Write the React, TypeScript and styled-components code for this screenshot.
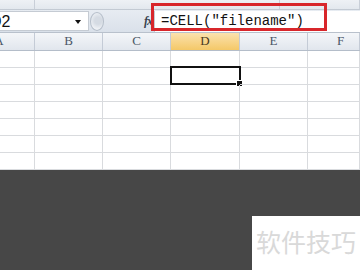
import React from 'react';
import styled, { createGlobalStyle } from 'styled-components';

const GlobalStyle = createGlobalStyle`
  html, body {
    margin: 0;
    padding: 0;
    background: #474747;
  }
`;

const Screen = styled.div`
  position: relative;
  width: 360px;
  height: 270px;
  overflow: hidden;
  display: flex;
  flex-direction: column;
  background: #474747;
`;

const RibbonStrip = styled.div`
  height: 9px;
  display: flex;
  background: linear-gradient(#eef1f5, #e3e8ee);
  border-bottom: 1px solid #c3cad3;
`;

const RibbonGroup = styled.div<{ $w?: number }>`
  width: ${(p) => (p.$w ? `${p.$w}px` : 'auto')};
  flex: ${(p) => (p.$w ? '0 0 auto' : '1')};
  border-right: 1px solid #c9cfd8;
`;

const FormulaBar = styled.div`
  height: 22px;
  display: flex;
  align-items: stretch;
  background: linear-gradient(#e7ecf2, #dae1ea);
  border-bottom: 1px solid #b9c1cc;
`;

const NameBox = styled.div`
  position: relative;
  width: 88px;
  margin: 1px 0;
  background: #fff;
  border: 1px solid #c5cbd3;
  border-left: none;
  overflow: hidden;
  font: 16px 'Liberation Sans', Arial, sans-serif;
  line-height: 20px;
  color: #111;
  text-indent: -10px;
`;

const DropArrow = styled.span`
  position: absolute;
  left: 75px;
  top: 8px;
  width: 0;
  height: 0;
  border-left: 3.5px solid transparent;
  border-right: 3.5px solid transparent;
  border-top: 4px solid #111;
`;

const Splitter = styled.div`
  width: 55px;
  display: flex;
  align-items: center;
`;

const SplitterKnob = styled.span`
  margin-left: 1px;
  width: 12px;
  height: 17px;
  border-radius: 50%;
  border: 1px solid #b5bec9;
  background: radial-gradient(circle at 60% 45%, #d5dbe3 30%, #eef1f5 70%);
`;

const FxLabel = styled.div`
  width: 10px;
  display: flex;
  align-items: center;
  font: italic bold 12px 'Liberation Serif', serif;
  color: #3a4350;
  letter-spacing: -1px;
`;

const FormulaInput = styled.div`
  flex: 1;
  margin: 1px 0 0 0;
  background: #fff;
  border-left: 1px solid #c5cbd3;
  padding-left: 6px;
  font: 14px 'Liberation Mono', 'Courier New', monospace;
  line-height: 20px;
  color: #111;
  white-space: nowrap;
`;

const Highlight = styled.div`
  position: absolute;
  left: 151px;
  top: 3px;
  width: 170px;
  height: 22px;
  border: 3px solid #d8262b;
  pointer-events: none;
`;

const COLS = '35px 68px 68px 69px 68px 1fr';

const HeaderRow = styled.div`
  display: grid;
  grid-template-columns: ${COLS};
  height: 17px;
  border-bottom: 1px solid #b4bdc9;
`;

const HeaderCell = styled.div<{ $active?: boolean; $shift?: number }>`
  display: flex;
  justify-content: center;
  align-items: flex-end;
  padding-bottom: 1px;
  box-sizing: border-box;
  overflow: hidden;
  border-right: 1px solid #c4cbd6;
  background: ${(p) =>
    p.$active
      ? 'linear-gradient(#fbe2ae, #f4c868)'
      : 'linear-gradient(#f4f6f9, #e1e6ed)'};
  font: 13px 'Liberation Serif', 'Times New Roman', serif;
  color: ${(p) => (p.$active ? '#4a3a1e' : '#4a5666')};

  span {
    transform: translateX(${(p) => p.$shift ?? 0}px);
  }
`;

const Row = styled.div`
  display: grid;
  grid-template-columns: ${COLS};
  height: 17px;
  background: #fff;
`;

const Cell = styled.div`
  position: relative;
  box-sizing: border-box;
  border-right: 1px solid #d9dbde;
  border-bottom: 1px solid #d9dbde;
`;

const Selection = styled.div`
  position: absolute;
  left: -1px;
  top: -2px;
  right: -2px;
  bottom: -1px;
  border: 2px solid #111;
`;

const FillHandle = styled.span`
  position: absolute;
  right: -4px;
  bottom: -4px;
  width: 5px;
  height: 5px;
  background: #111;
  border: 1px solid #fff;
`;

const DarkArea = styled.div`
  flex: 1;
  display: flex;
  justify-content: flex-end;
  align-items: flex-end;
  background: #474747;
`;

const Watermark = styled.div`
  width: 108px;
  height: 54px;
  background: #fff;
  box-sizing: border-box;
  padding: 10px 0 0 4px;
  overflow: hidden;
  white-space: nowrap;
  font: 25px 'Noto Sans CJK SC', 'Noto Sans', sans-serif;
  line-height: 30px;
  color: #d9d9d9;
`;

const columns = ['A', 'B', 'C', 'D', 'E', 'F'];

const App: React.FC = () => {
  return (
    <Screen>
      <GlobalStyle />
      <RibbonStrip>
        <RibbonGroup $w={34} />
        <RibbonGroup $w={244} />
        <RibbonGroup />
      </RibbonStrip>
      <FormulaBar>
        <NameBox>
          D2
          <DropArrow />
        </NameBox>
        <Splitter>
          <SplitterKnob />
        </Splitter>
        <FxLabel>fx</FxLabel>
        <FormulaInput>=CELL("filename")</FormulaInput>
      </FormulaBar>
      <HeaderRow>
        {columns.map((c, i) => (
          <HeaderCell key={c} $active={c === 'D'} $shift={i === 0 ? -18 : i === 5 ? 7 : 0}>
            <span>{c}</span>
          </HeaderCell>
        ))}
      </HeaderRow>
      {Array.from({ length: 7 }).map((_, r) => (
        <Row key={r}>
          {columns.map((c) => (
            <Cell key={c}>
              {r === 1 && c === 'D' && (
                <Selection>
                  <FillHandle />
                </Selection>
              )}
            </Cell>
          ))}
        </Row>
      ))}
      <DarkArea>
        <Watermark>软件技巧</Watermark>
      </DarkArea>
      <Highlight />
    </Screen>
  );
};

export default App;
